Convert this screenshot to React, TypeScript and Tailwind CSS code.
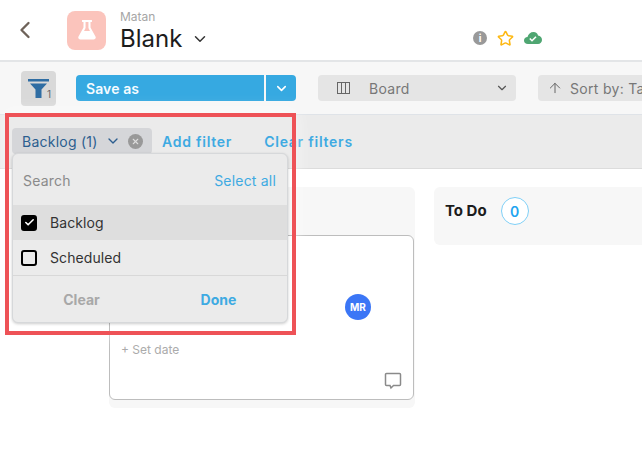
import { ChevronDown, ChevronLeft, ArrowUp, Check, X, Star } from "lucide-react";

function FlaskIcon() {
  return (
    <svg width="18" height="22" viewBox="0 0 20 24" fill="white">
      <path d="M4.500 1h11v2.200h-1.600v6l5.500 10c.9 1.800-.2 3.300-2 3.300H2.600c-1.800 0-2.900-1.500-2-3.300l5.500-10v-6H4.500z" />
      <path d="M8.400 3.200h3.200v6.600l1.700 3.200H6.700l1.700-3.200z" fill="#fbc4bc" />
    </svg>
  );
}

function FilterIcon() {
  return (
    <svg width="21" height="19" viewBox="0 0 21 19">
      <rect x="0" y="0" width="21" height="2.500" fill="#2f6da3" />
      <path d="M2 4.500h17l-5.500 6V19h-6v-8.500z" fill="#2f6da3" />
    </svg>
  );
}

function BoardIcon() {
  return (
    <svg width="13" height="12" viewBox="0 0 13 12" fill="none" stroke="#666" strokeWidth="1">
      <rect x="0.500" y="0.500" width="12" height="11" />
      <path d="M4.500 0.500v11M8.500 0.500v11" />
    </svg>
  );
}

function CloudIcon() {
  return (
    <svg width="18" height="12" viewBox="0 0 18 12">
      <path d="M4 12C1.500 12 0 10.500 0 8.500S1.500 5 3.500 5C4.200 2 6.500 0 9.500 0c2.500 0 4 1.500 4.500 3.500 2.500.2 4 2.200 4 4.500s-1.700 4-4 4z" fill="#4fa672" />
      <path d="M5.800 6.500l2.200 2.200 4-4" fill="none" stroke="white" strokeWidth="1.600" />
    </svg>
  );
}

function Checkbox({ checked }: { checked?: boolean }) {
  return (
    <div
      className={`flex items-center justify-center w-[16px] h-[16px] rounded-[3px] border-2 border-black ${
        checked ? "bg-black" : "bg-transparent"
      }`}
    >
      {checked && <Check size={11} strokeWidth={3.500} className="text-white" />}
    </div>
  );
}

function FilterPopover() {
  return (
    <div className="absolute left-[12px] top-[153px] w-[276px] h-[170px] flex flex-col rounded-md bg-[#ebebeb] border border-[#d6d8da] shadow-[0_1px_3px_rgba(0,0,0,0.2)] z-10">
      <div className="flex items-center justify-between h-[51px] pt-[2px] pl-[10px] pr-[11px] text-[14px] tracking-[0.2px]">
        <span className="text-[#8a8a8a]">Search</span>
        <span className="text-[#3eaae2]">Select all</span>
      </div>
      <div className="flex items-center gap-[13px] h-[35px] pl-[8px] bg-[#dedede] text-[14px] tracking-[0.1px] text-[#333]">
        <Checkbox checked />
        <span>Backlog</span>
      </div>
      <div className="flex items-center gap-[13px] h-[35px] pl-[8px] text-[14px] tracking-[0.1px] text-[#333]">
        <Checkbox />
        <span>Scheduled</span>
      </div>
      <div className="flex flex-1 items-center border-t border-[#d8d8d8] text-[14px] font-bold">
        <span className="w-[137px] text-center text-[#a8a8a8]">Clear</span>
        <span className="w-[137px] text-center text-[#3eaae2]">Done</span>
      </div>
    </div>
  );
}

export default function App() {
  return (
    <div className="relative w-[642px] h-[459px] overflow-hidden bg-white font-['Inter',sans-serif]">
      <header className="flex items-center h-[62px] border-b-2 border-[#e3e5e7] bg-white">
        <ChevronLeft size={28} strokeWidth={2} className="ml-[11px] shrink-0 text-[#6e6259]" />
        <div className="ml-[28px] flex items-center justify-center shrink-0 w-[39px] h-[39px] rounded-lg bg-[#fbc4bc]">
          <FlaskIcon />
        </div>
        <div className="ml-[14px] pt-[3px] flex flex-col">
          <span className="text-[12px] leading-[14px] text-[#a6a6a6]">Matan</span>
          <div className="flex items-center gap-[9px]">
            <span className="text-[24px] leading-[29px] text-[#1c1c1c]">Blank</span>
            <ChevronDown size={18} strokeWidth={2} className="text-[#333]" />
          </div>
        </div>
        <div className="ml-auto mr-[100px] mt-[16px] flex items-center gap-[10px]">
          <div className="flex items-center justify-center w-[14px] h-[14px] rounded-full bg-[#999] text-white text-[10px] font-bold leading-none">
            i
          </div>
          <Star size={17} strokeWidth={2.200} className="text-[#fdb813]" />
          <CloudIcon />
        </div>
      </header>

      <div className="flex items-center h-[53px] pl-[21px] bg-[#f7f7f7] border-b border-[#dfe3e8]">
        <div className="relative flex items-center justify-center shrink-0 w-[35px] h-[35px] rounded-[4px] bg-[#d9d9d9]">
          <FilterIcon />
          <span className="absolute right-[5px] bottom-[7px] text-[10px] leading-none text-[#666]">1</span>
        </div>
        <div className="ml-[20px] flex shrink-0 h-[26px] gap-[2px]">
          <div className="flex items-center w-[188px] pl-[10px] rounded-l-[4px] bg-[#36a9e1] text-[14px] tracking-[0.1px] font-semibold text-[#f4fbff]">
            Save as
          </div>
          <div className="flex items-center justify-center w-[30px] rounded-r-[4px] bg-[#36a9e1]">
            <ChevronDown size={15} strokeWidth={2.500} className="text-white" />
          </div>
        </div>
        <div className="ml-[22px] flex items-center shrink-0 w-[198px] h-[26px] pl-[19px] pr-[7px] rounded-[4px] bg-[#e5e5e5] text-[14px] tracking-[0.3px] text-[#777]">
          <BoardIcon />
          <span className="ml-[19px]">Board</span>
          <ChevronDown size={14} strokeWidth={2} className="ml-auto text-[#555]" />
        </div>
        <div className="ml-[22px] flex items-center shrink-0 w-[140px] h-[26px] pl-[9px] rounded-[4px] bg-[#e5e5e5] text-[14px] tracking-[0.3px] text-[#777] whitespace-nowrap">
          <ArrowUp size={16} strokeWidth={1.500} className="shrink-0 text-[#666]" />
          <span className="ml-[7px]">Sort by: Task</span>
        </div>
      </div>

      <div className="flex items-center h-[54px] pl-[12px] bg-[#ebebeb] border-b border-[#dcdcdc]">
        <div className="flex items-center shrink-0 w-[140px] h-[26px] mt-[-1px] pl-[10px] rounded-[4px] bg-[#d5d6d9] text-[14px] tracking-[0.25px] text-[#2c5e8f]">
          <span>Backlog (1)</span>
          <ChevronDown size={16} strokeWidth={2} className="ml-[7px] text-[#2c5e8f]" />
          <div className="ml-[7px] flex items-center justify-center w-[15px] h-[15px] rounded-full bg-[#999]">
            <X size={9} strokeWidth={3} className="text-[#ddd]" />
          </div>
        </div>
        <span className="ml-[10px] text-[14px] font-semibold tracking-[0.75px] text-[#3eaae2]">Add filter</span>
        <span className="ml-[32px] text-[14px] font-semibold tracking-[0.75px] text-[#3eaae2]">Clear filters</span>
      </div>

      <div className="flex items-start gap-[19px] pl-[109px] pt-[18px]">
        <div className="w-[306px] h-[221px] shrink-0 rounded-md bg-[#f7f7f7] pt-[48px]">
          <div className="flex flex-col w-[305px] h-[165px] rounded-md border border-[#bdbdbd] bg-white">
            <div className="flex justify-end pt-[58px] pr-[42px]">
              <div className="flex items-center justify-center w-[26px] h-[26px] rounded-full bg-[#3b76f6] text-[10px] font-bold text-white">
                MR
              </div>
            </div>
            <span className="mt-[21px] pl-[11px] text-[12px] text-[#aaa]">+ Set date</span>
            <div className="mt-auto flex justify-end pr-[11px] pb-[9px]">
              <svg width="18" height="18" viewBox="0 0 18 18" fill="none" stroke="#8a8a8a" strokeWidth="1.500">
                <path d="M2.500 1.500h13a1 1 0 0 1 1 1v10a1 1 0 0 1-1 1H9.500L7 16l-1-2.500H2.500a1 1 0 0 1-1-1v-10a1 1 0 0 1 1-1z" />
              </svg>
            </div>
          </div>
        </div>
        <div className="flex items-center w-[300px] h-[58px] shrink-0 pl-[11px] pb-[10px] rounded-l-md bg-[#f7f7f7]">
          <span className="text-[15px] font-bold text-[#1c1c1c]">To Do</span>
          <div className="ml-[14px] flex items-center justify-center w-[28px] h-[28px] rounded-full border border-[#7fd0f7] bg-white text-[14px] font-semibold text-[#1ea5f0]">
            0
          </div>
        </div>
      </div>

      <FilterPopover />
      <div className="absolute left-[5px] top-[113px] w-[291px] h-[222px] border-[4px] border-[#ee5257] shadow-[0_0_16px_rgba(255,255,255,0.6)] pointer-events-none z-20" />
    </div>
  );
}
